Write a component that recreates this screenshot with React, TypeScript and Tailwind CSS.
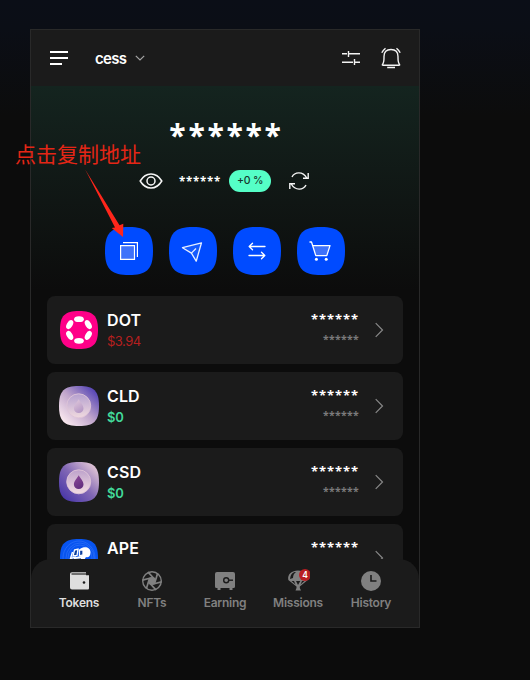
import type { ReactNode } from "react";

const SQUIRCLE = "M24 0C42 0 48 6 48 24S42 48 24 48 0 42 0 24 6 0 24 0Z";

function ActionButton({ children }: { children: ReactNode }) {
  return (
    <button className="block h-12 w-12">
      <svg width="48" height="48" viewBox="0 0 48 48" fill="none">
        <path d={SQUIRCLE} fill="#004bff" />
        {children}
      </svg>
    </button>
  );
}

function DotLogo() {
  return (
    <svg width="40" height="40" viewBox="0 0 40 40">
      <path transform="translate(1 1) scale(.7917)" d={SQUIRCLE} fill="#ff0088" />
      <g fill="#fff">
        <ellipse cx="20" cy="9.2" rx="4.9" ry="2.9" />
        <ellipse cx="20" cy="30.8" rx="4.9" ry="2.9" />
        <ellipse cx="10.7" cy="14.6" rx="4.9" ry="2.9" transform="rotate(-60 10.7 14.6)" />
        <ellipse cx="29.3" cy="14.6" rx="4.9" ry="2.9" transform="rotate(60 29.3 14.6)" />
        <ellipse cx="10.7" cy="25.4" rx="4.9" ry="2.9" transform="rotate(60 10.7 25.4)" />
        <ellipse cx="29.3" cy="25.4" rx="4.9" ry="2.9" transform="rotate(-60 29.3 25.4)" />
      </g>
    </svg>
  );
}

function DropLogo({ dark }: { dark?: boolean }) {
  const id = dark ? "csd" : "cld";
  return (
    <svg width="40" height="40" viewBox="0 0 40 40">
      <defs>
        <linearGradient id={id + "-bg"} x1="0.1" y1="0.9" x2="0.9" y2="0.1">
          <stop offset="0" stopColor={dark ? "#4a38a8" : "#fbeaf0"} />
          <stop offset="0.5" stopColor={dark ? "#8268b5" : "#c0a5cb"} />
          <stop offset="1" stopColor={dark ? "#e1c5d6" : "#5544b4"} />
        </linearGradient>
        <linearGradient id={id + "-coin"} x1="0" y1="0" x2="0" y2="1">
          <stop offset="0" stopColor={dark ? "#bda2cb" : "#b5a0cf"} />
          <stop offset="1" stopColor={dark ? "#f3dce2" : "#f0dadf"} />
        </linearGradient>
        <linearGradient id={id + "-drop"} x1="0" y1="0" x2="0.5" y2="1">
          <stop offset="0" stopColor={dark ? "#8e4b99" : "#e3cbdc"} />
          <stop offset="1" stopColor={dark ? "#653080" : "#b79ac6"} />
        </linearGradient>
      </defs>
      <path transform="scale(.8333)" d={SQUIRCLE} fill={`url(#${id}-bg)`} />
      <circle cx="19.7" cy="19.8" r="12" fill={`url(#${id}-coin)`} stroke="#dfc5d8" strokeWidth="0.9" />
      <path d="M19.7 13.2C21.4 16.5 24.5 19 24.5 22.4A4.8 4.6 0 0 1 14.9 22.4C14.9 19 18 16.5 19.7 13.2Z" fill={`url(#${id}-drop)`} />
    </svg>
  );
}

function ApeLogo() {
  return (
    <svg width="40" height="40" viewBox="0 0 40 40" fill="none">
      <path transform="translate(1 1) scale(.7917)" d={SQUIRCLE} fill="#0754f0" />
      <g stroke="#3e7bfa" strokeWidth="0.5">
        <ellipse cx="21" cy="20" rx="12" ry="13" />
        <ellipse cx="21" cy="20" rx="14" ry="15" />
        <ellipse cx="20" cy="20" rx="16" ry="17" />
      </g>
      <path d="M21 11C24 8.5 31.5 8 31.5 14.5C31.5 19 28.5 20 27 19L24 24H13L17 19L22 18Z" fill="#fff" />
      <path d="M15.5 12L19 11.2L18 17.5L14 18ZM20.5 12H24V17L20.5 17.8Z" fill="#0d3f9d" stroke="#fff" strokeWidth="1.3" />
      <path d="M13.5 14L11.5 20.5L17 19M15 20.5L23 19.5" stroke="#fff" strokeWidth="1.4" />
      <path d="M16 21.5L22 20.8" stroke="#16489f" strokeWidth="1" />
    </svg>
  );
}

interface Token {
  symbol: string;
  price: string;
  priceClass: string;
  logo: ReactNode;
}

const tokens: Token[] = [
  { symbol: "DOT", price: "$3.94", priceClass: "text-[#b51f1f] font-normal tracking-[-0.5px]", logo: <DotLogo /> },
  { symbol: "CLD", price: "$0", priceClass: "text-[#42d99a] font-semibold tracking-[-0.3px]", logo: <DropLogo /> },
  { symbol: "CSD", price: "$0", priceClass: "text-[#42d99a] font-semibold tracking-[-0.3px]", logo: <DropLogo dark /> },
  { symbol: "APE", price: "$0", priceClass: "text-[#42d99a] font-semibold tracking-[-0.3px]", logo: <ApeLogo /> },
];

function TokenRow({ token }: { token: Token }) {
  return (
    <div className="flex h-[68px] shrink-0 items-center rounded-lg bg-[#1b1b1b] pl-3">
      <div className="h-10 w-10 shrink-0">{token.logo}</div>
      <div className="ml-2 flex-1">
        <div className="text-[16px] leading-[24px] font-semibold tracking-[0.1px] text-white">{token.symbol}</div>
        <div className={"h-[20px] text-[13px] leading-[18px] " + token.priceClass}>{token.price}</div>
      </div>
      <div className="flex w-[60px] flex-col items-end font-['Open_Sans',sans-serif] font-bold">
        <div className="h-[24px] text-[13px] leading-[22px] tracking-[0.92px] text-white">******</div>
        <div className="h-[20px] text-[10.5px] leading-[15px] tracking-[0.28px] text-[#7b7b7b]">******</div>
      </div>
      <svg className="ml-[15px] mr-[17px]" width="12" height="16" viewBox="0 0 12 16" fill="none" stroke="#888" strokeWidth="1.2">
        <path d="M1.7 1.2L8.5 8L1.7 14.8" />
      </svg>
    </div>
  );
}

function NavItem({ label, active, children }: { label: string; active?: boolean; children: ReactNode }) {
  return (
    <div className={"flex w-[73px] flex-col items-center " + (active ? "text-[#dedede]" : "text-[#808080]")}>
      <svg width="24" height="24" viewBox="0 0 24 24" fill="none">
        {children}
      </svg>
      <span className="text-[12px] leading-5 font-semibold tracking-[-0.25px] whitespace-nowrap">{label}</span>
    </div>
  );
}

export default function App() {
  return (
    <div className="relative h-[680px] w-[530px] overflow-hidden bg-[#0c0c0c] bg-[linear-gradient(to_bottom,#0b0e17_0,#0b0e16_28px,#0c0c0c_116px)] pt-[29px] pl-[30px] font-['Inter','Liberation_Sans',sans-serif]">
      <main className="relative flex h-[599px] w-[390px] flex-col overflow-hidden border border-[#292929] bg-[#0c0c0c]">
        <header className="flex h-[56px] shrink-0 items-center bg-[#1b1b1b] pl-[19px] pr-[17px]">
          <svg width="18" height="16" viewBox="0 0 18 16" stroke="#fff" strokeWidth="2">
            <path d="M0 2H18M0 8H18M0 14H12" />
          </svg>
          <span className="ml-[27px] h-[22px] text-[15px] leading-6 font-semibold tracking-[-0.7px] text-white">cess</span>
          <svg className="ml-[9px]" width="10" height="6" viewBox="0 0 10 6" fill="none" stroke="#a5a5a5" strokeWidth="1.2">
            <path d="M.8.8L5 5L9.2.8" />
          </svg>
          <svg className="ml-auto" width="20" height="18" viewBox="0 0 20 18" fill="none" stroke="#f3f3f3" strokeWidth="1.4">
            <path d="M1 4.8H6M7.5 4.8H19M7.5 2V8M1 13.2H12M13.5 13.2H19M13.5 10V16" />
          </svg>
          <svg className="ml-[19px]" width="22" height="24" viewBox="0 0 22 24" fill="none" stroke="#f3f3f3" strokeWidth="1.4">
            <path d="M2.5 18.5C4.2 16.5 4 13.5 4 10.5C4 5.5 6.5 3.5 11 3.5S18 5.5 18 10.5C18 13.5 17.8 16.5 19.5 18.5Q20 19.2 19 19.2H3Q2 19.2 2.5 18.5ZM7.2 21.5H15M1.8 6.7Q3.2 4 5.5 2.2M20.2 6.7Q18.8 4 16.5 2.2" />
          </svg>
        </header>

        <section className="flex h-[204px] shrink-0 flex-col bg-linear-to-b from-[#14241f] to-[#0c0c0c]">
          <div className="mt-[28px] h-[44px] pl-[3px] text-center font-['Open_Sans',sans-serif] text-[30px] leading-[41px] font-bold tracking-[2.7px] text-white">******</div>
          <div className="mt-[12px] flex h-[22px] items-center pl-[108px]">
            <svg width="24" height="18" viewBox="0 0 24 18" fill="none" stroke="#f5f5f5" strokeWidth="1.5">
              <path d="M1.2 9C4.2 4 8 2 12 2S19.8 4 22.8 9C19.8 14 16 16 12 16S4.2 14 1.2 9Z" />
              <circle cx="12" cy="9" r="4" />
            </svg>
            <span className="ml-[16px] h-[22px] w-[43px] font-['Open_Sans',sans-serif] text-[11.5px] leading-[23px] font-bold tracking-[0.73px] text-white">******</span>
            <span className="ml-[7px] flex h-[22px] w-[42px] items-center justify-center rounded-full bg-[#55ffc7] pt-px text-[10.5px] leading-none font-medium tracking-[-0.2px] text-[#15392d]">+0 %</span>
            <svg className="ml-[17px]" width="22" height="20" viewBox="0 0 22 20" fill="none" stroke="#f5f5f5" strokeWidth="1.4">
              <path d="M4 6C6.5 1 14.5-.3 18.8 7M20.2 2V7.2H15M18 14C15.5 19 7.5 20.3 3.2 13M1.8 18V12.8H7" />
            </svg>
          </div>
          <div className="mt-[35px] flex justify-center gap-4">
            <ActionButton>
              <path d="M15.6 18.6H29.5V32.4H15.6Z" fill="#3e72fa" stroke="#fff" strokeWidth="1.2" />
              <path d="M18 15.7H32.4V30" stroke="#fff" strokeWidth="1.2" />
            </ActionButton>
            <ActionButton>
              <path d="M13.5 20.7L32.5 15.8L27.2 34.2L22.4 26.1Z" fill="#145aff" stroke="#e6eeff" strokeWidth="1.3" strokeLinejoin="round" />
              <path d="M22.4 26.1L27 21.5" stroke="#e6eeff" strokeWidth="1.3" />
            </ActionButton>
            <ActionButton>
              <path d="M32 19.5H16.5M19.5 16.2L16.2 19.5L19.5 22.8M16 28.5H31.5M28.5 25.2L31.8 28.5L28.5 31.8" stroke="#fff" strokeWidth="1.3" strokeLinecap="round" strokeLinejoin="round" />
            </ActionButton>
            <ActionButton>
              <path d="M15.8 18.5H33L29.8 28.5H18.8Z" fill="#3e72fa" />
              <path d="M12.5 15H14.5L18.8 28.6H29.8L33 18.6H15.8" stroke="#fff" strokeWidth="1.3" strokeLinejoin="round" />
              <circle cx="19.4" cy="32.3" r="1.5" fill="#fff" />
              <circle cx="29.2" cy="32.3" r="1.5" fill="#fff" />
            </ActionButton>
          </div>
        </section>

        <section className="flex flex-col gap-2 px-4 pt-[6px]">
          {tokens.map((t) => (
            <TokenRow key={t.symbol} token={t} />
          ))}
        </section>

        <nav className="absolute inset-x-0 bottom-0 flex h-[68px] justify-center rounded-t-[20px] bg-[#1b1b1b] pt-[10px]">
          <NavItem label="Tokens" active>
            <path d="M4 3.2H19V6.2H22V19C22 20 21.5 20.5 20.5 20.5H5Q3 20.5 3 18.5V5Q3 3.2 5 3.2Z" fill="#dedede" />
            <path d="M4.5 5H19.5" stroke="#333" strokeWidth="1.3" />
            <circle cx="17" cy="13.5" r="1.3" fill="#1b1b1b" />
          </NavItem>
          <NavItem label="NFTs">
            <circle cx="12" cy="12" r="9.3" stroke="#808080" strokeWidth="1.4" />
            <circle cx="12" cy="12" r="4" fill="#808080" />
            <g stroke="#808080" strokeWidth="1.7">
              <path d="M8 3.2L14 9.5" />
              <path d="M8 3.2L14 9.5" transform="rotate(60 12 12)" />
              <path d="M8 3.2L14 9.5" transform="rotate(120 12 12)" />
              <path d="M8 3.2L14 9.5" transform="rotate(180 12 12)" />
              <path d="M8 3.2L14 9.5" transform="rotate(240 12 12)" />
              <path d="M8 3.2L14 9.5" transform="rotate(300 12 12)" />
            </g>
          </NavItem>
          <NavItem label="Earning">
            <path d="M4 3H20Q22 3 22 5V17.5Q22 19 20.5 19H19.5V21H16.5V19H7.5V21H4.5V19H3.5Q2 19 2 17.5V5Q2 3 4 3Z" fill="#808080" />
            <circle cx="13.2" cy="11.2" r="2.5" stroke="#1b1b1b" strokeWidth="1.4" />
            <path d="M16 11.2H20" stroke="#1b1b1b" strokeWidth="1.4" />
          </NavItem>
          <NavItem label="Missions">
            <path d="M2.3 11C1.3 5 6 1.5 12 1.5S22.7 5 21.7 11L13.8 17.5V19L15 21.5H9.5L10.5 19V17.5ZM5.5 12L9.5 15.5L8 12ZM10 12L12 16L14.3 12ZM16 12L14.5 15.5L18.5 12Z" fill="#808080" fillRule="evenodd" />
            <path d="M8.5 3Q4.4 4.3 4 10L7 9Q7 5 10 3" fill="#1b1b1b" />
            <circle cx="19" cy="6" r="6" fill="#b91e23" />
            <text x="19" y="9.1" textAnchor="middle" fill="#fff" className="text-[8.5px] font-semibold">4</text>
          </NavItem>
          <NavItem label="History">
            <circle cx="12" cy="12" r="10" fill="#808080" />
            <path d="M12 6V12H17.5" stroke="#1b1b1b" strokeWidth="1.6" />
          </NavItem>
        </nav>
      </main>

      <div className="absolute top-[138px] left-[15px] font-['Noto_Sans_CJK_SC',sans-serif] text-[21px] leading-[30px] font-normal whitespace-nowrap text-[#e42616]">点击复制地址</div>
      <svg className="absolute top-[168px] left-[84px]" width="44" height="72" viewBox="0 0 44 72">
        <path d="M1.2 1.5L35.5 57.3L39.3 55.7L39 69L27.7 60L31 59.5Z" fill="#ff261b" />
      </svg>
    </div>
  );
}
